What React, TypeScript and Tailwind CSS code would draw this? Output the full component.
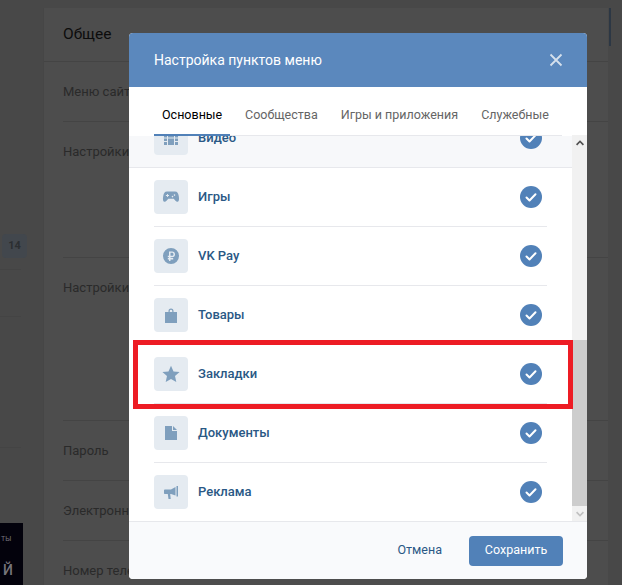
import { ReactNode } from "react";

const font = { fontFamily: "Roboto, sans-serif" };

interface Row {
  title: string;
  icon: ReactNode;
}

const rows: Row[] = [
  {
    title: "Видео",
    icon: <path fillRule="evenodd" d="M3 3h3v3H3zM3 7h3v2.500H3zM3 10.500h3V13H3zM3 14h3v3H3zM14 3h3v3h-3zM14 7h3v2.500h-3zM14 10.500h3V13h-3zM14 14h3v3h-3zM7 3h6v6.500H7zM7 10.500h6V17H7z" />,
  },
  {
    title: "Игры",
    icon: <path fillRule="evenodd" d="M6 4.500h8c2.400 0 3.200 2 3.700 4.200.5 2.400.7 5.600-1 6-1.500.4-2.700-1.800-4-3H7.300c-1.300 1.200-2.500 3.400-4 3-1.700-.4-1.500-3.600-1-6C2.800 6.500 3.600 4.500 6 4.500zM6 7v1.100H4.900v.9H6v1.100h.9V9H8v-.9H6.900V7zm7.500.3a.8.8 0 100 1.600.8.8 0 000-1.600zm-2 1.500a.8.8 0 100 1.600.8.8 0 000-1.600z" />,
  },
  {
    title: "VK Pay",
    icon: <path fillRule="evenodd" d="M10 2a8 8 0 110 16 8 8 0 010-16zM8 5.500v4.300H6.800v1.400H8v.9H6.800v1.300H8v1.600h1.500v-1.600h2.700v-1.300H9.500v-.9h1.700c1.700 0 2.800-1.100 2.800-2.900 0-1.700-1.100-2.800-2.800-2.800zm1.500 1.300h1.600c.9 0 1.400.6 1.400 1.500 0 1-.5 1.500-1.400 1.500H9.500z" />,
  },
  {
    title: "Товары",
    icon: <path fillRule="evenodd" d="M7.500 7V6a2.500 2.500 0 015 0v1H16v11H4V7zm1.200 0h2.600V6a1.300 1.300 0 00-2.600 0z" />,
  },
  {
    title: "Закладки",
    icon: <path d="M10 1.800l2.500 5.600 6.100.6-4.600 4.100 1.300 6-5.300-3.100-5.300 3.100 1.300-6L1.400 8l6.100-.6z" />,
  },
  {
    title: "Документы",
    icon: <path d="M4 3h7v5h5v9H4zM12 3l4 4h-4z" />,
  },
  {
    title: "Реклама",
    icon: <path d="M3 8.500C3 7.800 3.500 7.500 4 7.500h6L14.500 5v8.500L10 12h-.8l.5 5H7.500l-.7-5H4c-.6 0-1-.4-1-1zM15.500 4H17v10.500h-1.500z" />,
  },
];

function MenuRow({ row, hovered, last }: { row: Row; hovered?: boolean; last?: boolean }) {
  return (
    <div className={hovered ? "bg-[#f7f8fa] border-b border-[#e7e8ec]" : ""}>
      <div className={`mx-[25px] h-[59px] flex items-center ${hovered ? "" : last ? "border-b border-transparent" : "border-b border-[#e7e8ec]"}`}>
        <div className="w-[34px] h-[34px] rounded bg-[#e5ebf1] flex items-center justify-center">
          <svg viewBox="0 0 20 20" className="w-[20px] h-[20px] fill-[#7f9fbd]">
            {row.icon}
          </svg>
        </div>
        <span className="ml-[10px] text-[13px] font-medium text-[#2a5885] flex-1">{row.title}</span>
        <svg viewBox="0 0 22 22" className="w-[22px] h-[22px] mr-[5px]">
          <circle cx="11" cy="11" r="11" fill="#5181b8" />
          <path d="M6.500 11.500l3 3 6-6.300" fill="none" stroke="#fff" strokeWidth="2" strokeLinecap="round" strokeLinejoin="round" />
        </svg>
      </div>
    </div>
  );
}

function Scrollbar() {
  return (
    <div className="w-[15px] shrink-0 -mt-px bg-[#f1f1f1] flex flex-col">
      <div className="h-[15px] flex items-center justify-center">
        <svg viewBox="0 0 10 7" className="w-[8px] h-[6px] fill-[#505050]">
          <path d="M5 0l5 5-1.500 1.500L5 3 1.500 6.500 0 5z" />
        </svg>
      </div>
      <div className="h-[190px]" />
      <div className="flex-1 bg-[#cdcdcd]" />
      <div className="h-[15px] flex items-center justify-center">
        <svg viewBox="0 0 10 7" className="w-[8px] h-[6px] fill-[#c0c0c0]">
          <path d="M5 7L0 2l1.500-1.500L5 4 8.500.5 10 2z" />
        </svg>
      </div>
    </div>
  );
}

function Setting({ label, h }: { label: string; h: number }) {
  return (
    <div style={{ height: h }} className="border-b border-[#444444] pt-[20px] text-[13px] text-[#2a2a2a] whitespace-nowrap">
      {label}
    </div>
  );
}

export default function App() {
  return (
    <div style={font} className="relative w-[622px] h-[585px] overflow-hidden bg-[#484848]">
      {/* страница под затемнением */}
      <div className="flex h-full">
        <div className="w-[43px] shrink-0 flex flex-col">
          <div className="mt-[234px] ml-[2px] w-[25px] h-[24px] rounded-sm bg-[#42474d] text-[#2b2e31] text-[11px] font-bold flex items-center justify-center [-webkit-font-smoothing:antialiased]">
            14
          </div>
          <div className="mt-[11px] mr-[22px] border-b border-[#444444]" />
          <div className="mt-[46px] mr-[22px] border-b border-[#444444]" />
          <div className="mt-[130px] mr-[22px] border-b border-[#444444]" />
          <div className="mt-auto w-[23px] h-[62px] bg-[#03020c] overflow-hidden text-[#77757c] text-[7px] leading-none">
            <div className="pt-[13px] pl-[1px]">ТЫ</div>
            <div className="pt-[20px] pl-[3px] text-[14px] font-medium">Й</div>
          </div>
        </div>
        <div className="w-[565px] shrink-0 mt-[8px] bg-[#4d4d4d] border-l border-[#464646]">
          <div className="h-[54px] flex items-center pl-[19px] border-b border-[#444444] text-[15.5px] text-[#0c0c0c]">Общее</div>
          <div className="pl-[19px]">
            <Setting label="Меню сайта" h={60} />
            <Setting label="Настройки" h={136} />
            <Setting label="Настройки" h={163} />
            <Setting label="Пароль" h={60} />
            <Setting label="Электронная почта" h={60} />
            <Setting label="Номер телефона" h={60} />
          </div>
        </div>
        <div className="flex-1 mt-[8px] ml-[1px]">
          <div className="w-[2px] h-[38px] bg-[#2c3744]" />
        </div>
      </div>

      {/* окно настройки */}
      <div className="absolute left-[129px] top-[33px] w-[458px] h-[546px] rounded bg-white flex flex-col overflow-hidden">
        <div className="h-[54px] shrink-0 bg-[#5b88bd] flex items-center pl-[25px] pr-[24px] justify-between">
          <span className="text-[14px] text-white">Настройка пунктов меню</span>
          <svg viewBox="0 0 14 14" className="w-[14px] h-[14px] stroke-[#d5e0ec]" fill="none" strokeWidth="1.800">
            <path d="M1.500 1.500l11 11M12.500 1.500l-11 11" />
          </svg>
        </div>
        <div className="h-[49px] shrink-0 ml-[25px] mr-[25px] flex border-b border-[#e7e8ec] text-[12.5px] text-[#656565] whitespace-nowrap">
          <div className="w-[76px] h-[49px] pl-[8px] pt-[19px] border-b-2 border-[#5181b8] text-[#000]">Основные</div>
          <div className="ml-[7px] px-[8px] pt-[19px]">Сообщества</div>
          <div className="ml-[7px] px-[8px] pt-[19px]">Игры и приложения</div>
          <div className="ml-[7px] px-[8px] pt-[19px]">Служебные</div>
        </div>
        <div className="flex-1 flex min-h-0">
          <div className="flex-1 overflow-hidden">
            <div className="-mt-[28px]">
              {rows.map((r, i) => (
                <MenuRow key={r.title} row={r} hovered={i === 0} last={i === rows.length - 1} />
              ))}
            </div>
          </div>
          <Scrollbar />
        </div>
        <div className="h-[58px] shrink-0 bg-[#f9fafc] border-t border-[#e7e8ec] flex items-center justify-end pr-[24px] text-[12.5px]">
          <span className="text-[#2a5885] mr-[27px]">Отмена</span>
          <div className="w-[94px] h-[30px] rounded bg-[#5181b8] text-white flex items-center justify-center">Сохранить</div>
        </div>
      </div>

      {/* красная рамка поверх */}
      <div className="absolute left-[133px] top-[340px] w-[440px] h-[69px] border-[5px] border-[#ed1c24]" />
    </div>
  );
}
